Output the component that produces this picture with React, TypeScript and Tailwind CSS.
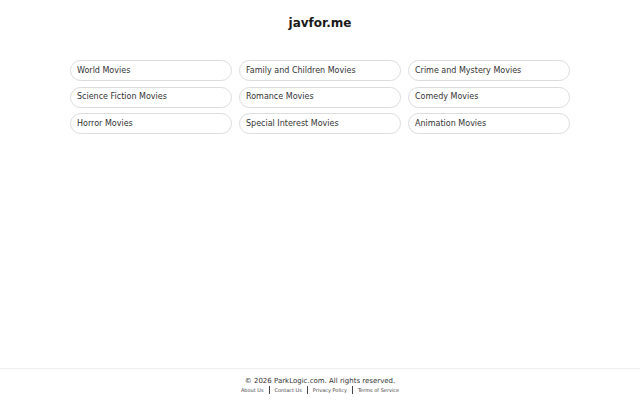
import React from 'react';

const categories = [
  'World Movies',
  'Family and Children Movies',
  'Crime and Mystery Movies',
  'Science Fiction Movies',
  'Romance Movies',
  'Comedy Movies',
  'Horror Movies',
  'Special Interest Movies',
  'Animation Movies',
];

const links = ['About Us', 'Contact Us', 'Privacy Policy', 'Terms of Service'];

export default function App() {
  return (
    <div className="min-h-screen flex flex-col bg-white font-['DejaVu_Sans',sans-serif] text-[#222]">
      {/* Header */}
      <div className="pt-[15px] text-center">
        <h1 className="text-[12px] leading-[17px] font-bold text-[#1a1a1a]">javfor.me</h1>
      </div>

      {/* Categories */}
      <div className="mt-[28px] w-[500px] mx-auto grid grid-cols-3 gap-x-[7px] gap-y-[5.5px]">
        {categories.map((c) => (
          <a
            key={c}
            href="#"
            className="h-[21px] flex items-center px-[6px] rounded-full border border-[#dcdcdc] text-[8px] text-[#333]"
          >
            {c}
          </a>
        ))}
      </div>

      {/* Footer */}
      <footer className="mt-auto h-[32px] border-t border-[#eeeeee] flex flex-col items-center pt-[7px]">
        <p className="text-[7px] leading-[10px] text-[#333]">© 2026 ParkLogic.com. All rights reserved.</p>
        <div className="flex items-center text-[5px] leading-[8px] text-[#444]">
          {links.map((l, i) => (
            <React.Fragment key={l}>
              {i > 0 && <span className="mx-[5px] w-px h-[8px] bg-[#444]"></span>}
              <a href="#">{l}</a>
            </React.Fragment>
          ))}
        </div>
      </footer>
    </div>
  );
}
